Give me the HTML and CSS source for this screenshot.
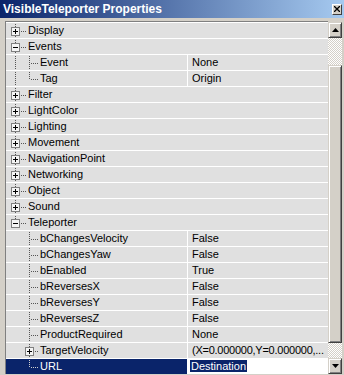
FILE: index.html
```html
<!DOCTYPE html>
<html lang="en">
<head>
  <meta charset="UTF-8">
  <title>VisibleTeleporter Properties</title>
  <link rel="stylesheet" href="styles.css">
</head>
<body>
  <div class="window">

    <!-- Caption -->
    <div class="titlebar">
      <div class="title">VisibleTeleporter Properties</div>
      <div class="close">
        <svg width="6" height="6" viewBox="0 0 6 6"><path d="M0 0L6 6M6 0L0 6" stroke="#000" stroke-width="1.3"/></svg>
      </div>
    </div>

    <div class="frame">
      <!-- Property list -->
      <div class="list">
        <div class="row cat">
          <div class="name"><span class="g g1 box plus"><i class="bx"></i></span><span class="label">Display</span></div>
        </div>
        <div class="row cat">
          <div class="name"><span class="g g1 box"><i class="bx"></i></span><span class="label">Events</span></div>
        </div>
        <div class="row prop">
          <div class="name"><span class="g g0 pipe"></span><span class="g g2 tee"></span><span class="label">Event</span></div>
          <div class="val">None</div>
        </div>
        <div class="row prop">
          <div class="name"><span class="g g0 pipe"></span><span class="g g2 end"></span><span class="label">Tag</span></div>
          <div class="val">Origin</div>
        </div>
        <div class="row cat">
          <div class="name"><span class="g g1 box plus"><i class="bx"></i></span><span class="label">Filter</span></div>
        </div>
        <div class="row cat">
          <div class="name"><span class="g g1 box plus"><i class="bx"></i></span><span class="label">LightColor</span></div>
        </div>
        <div class="row cat">
          <div class="name"><span class="g g1 box plus"><i class="bx"></i></span><span class="label">Lighting</span></div>
        </div>
        <div class="row cat">
          <div class="name"><span class="g g1 box plus"><i class="bx"></i></span><span class="label">Movement</span></div>
        </div>
        <div class="row cat">
          <div class="name"><span class="g g1 box plus"><i class="bx"></i></span><span class="label">NavigationPoint</span></div>
        </div>
        <div class="row cat">
          <div class="name"><span class="g g1 box plus"><i class="bx"></i></span><span class="label">Networking</span></div>
        </div>
        <div class="row cat">
          <div class="name"><span class="g g1 box plus"><i class="bx"></i></span><span class="label">Object</span></div>
        </div>
        <div class="row cat">
          <div class="name"><span class="g g1 box plus"><i class="bx"></i></span><span class="label">Sound</span></div>
        </div>
        <div class="row cat">
          <div class="name"><span class="g g1 box last"><i class="bx"></i></span><span class="label">Teleporter</span></div>
        </div>
        <div class="row prop">
          <div class="name"><span class="g g0"></span><span class="g g2 tee"></span><span class="label">bChangesVelocity</span></div>
          <div class="val">False</div>
        </div>
        <div class="row prop">
          <div class="name"><span class="g g0"></span><span class="g g2 tee"></span><span class="label">bChangesYaw</span></div>
          <div class="val">False</div>
        </div>
        <div class="row prop">
          <div class="name"><span class="g g0"></span><span class="g g2 tee"></span><span class="label">bEnabled</span></div>
          <div class="val">True</div>
        </div>
        <div class="row prop">
          <div class="name"><span class="g g0"></span><span class="g g2 tee"></span><span class="label">bReversesX</span></div>
          <div class="val">False</div>
        </div>
        <div class="row prop">
          <div class="name"><span class="g g0"></span><span class="g g2 tee"></span><span class="label">bReversesY</span></div>
          <div class="val">False</div>
        </div>
        <div class="row prop">
          <div class="name"><span class="g g0"></span><span class="g g2 tee"></span><span class="label">bReversesZ</span></div>
          <div class="val">False</div>
        </div>
        <div class="row prop">
          <div class="name"><span class="g g0"></span><span class="g g2 tee"></span><span class="label">ProductRequired</span></div>
          <div class="val">None</div>
        </div>
        <div class="row prop">
          <div class="name"><span class="g g0"></span><span class="g g2 box plus"><i class="bx"></i></span><span class="label">TargetVelocity</span></div>
          <div class="val long">(X=0.000000,Y=0.000000,...</div>
        </div>
        <div class="row prop selected">
          <div class="name"><span class="g g0"></span><span class="g g2 end"></span><span class="label">URL</span></div>
          <div class="val edit"><span class="sel">Destination</span></div>
        </div>
      </div>

      <!-- Scrollbar -->
      <div class="scrollbar">
        <div class="sbtn">
          <svg width="7" height="4" viewBox="0 0 7 4"><path d="M3.5 0L7 4H0Z" fill="#000"/></svg>
        </div>
        <div class="track top"></div>
        <div class="thumb"></div>
        <div class="track bottom"></div>
        <div class="sbtn">
          <svg width="7" height="4" viewBox="0 0 7 4"><path d="M0 0H7L3.5 4Z" fill="#000"/></svg>
        </div>
      </div>
    </div>
  </div>
</body>
</html>
```

FILE: styles.css
```css
body {
  margin: 0;
  font-family: "Liberation Sans", Arial, sans-serif;
  background: #d4d0c8;
}

.window {
  width: 344px;
  height: 375px;
  background: #d4d0c8;
  overflow: hidden;
}

/* Caption */
.titlebar {
  height: 18px;
  display: flex;
  justify-content: space-between;
  align-items: center;
  padding: 0 2px 0 3px;
  background: linear-gradient(to right, #0a246a, #a6caf0);
}

.title {
  color: #fff;
  font-weight: bold;
  font-size: 12px;
  line-height: 18px;
}

.close {
  width: 10px;
  height: 11px;
  box-sizing: border-box;
  display: flex;
  align-items: center;
  justify-content: center;
  background: #d4d0c8;
  border: 1px solid;
  border-color: #fff #404040 #404040 #fff;
}

/* Body */
.frame {
  display: flex;
  padding: 3px 2px 1px 5px;
}

.list {
  width: 323px;
  box-sizing: border-box;
  border-top: 1px solid #808080;
  border-left: 1px solid #808080;
  font-size: 11px;
  color: #000;
}

.row {
  height: 16px;
  box-sizing: border-box;
  border-top: 1px solid #fff;
  background: #e0e0e0;
  display: flex;
  --dot: #555;
}

.name {
  display: flex;
  align-items: flex-start;
  height: 15px;
  overflow: hidden;
}

.cat .name {
  flex: 1;
}

.prop .name {
  width: 181px;
  border-right: 1px solid #fff;
}

.label {
  line-height: 15px;
  white-space: nowrap;
  margin-left: 2px;
}

.val {
  flex: 1;
  line-height: 15px;
  padding-left: 4px;
  white-space: nowrap;
  overflow: hidden;
}

.val.long {
  letter-spacing: -0.25px;
}

.selected .name {
  background: #0a246a;
  color: #fff;
  --dot: #d0d0d0;
}

.val.edit {
  background: #fff;
  padding-left: 2px;
}

.val .sel {
  background: #0a246a;
  color: #fff;
  padding: 0 1px;
}

/* Tree guides */
.g {
  position: relative;
  flex: none;
  height: 15px;
}

.g0 { width: 18px; --x: 9px; }
.g1 { width: 20px; --x: 9px; }
.g2 { width: 14px; --x: 5px; }

.pipe::before,
.tee::before,
.end::before,
.box::before {
  content: "";
  position: absolute;
  left: var(--x);
  top: -1px;
  bottom: 0;
  width: 1px;
  background: repeating-linear-gradient(to bottom, var(--dot) 0 1px, transparent 1px 2px);
}

.end::before,
.box.last::before {
  bottom: auto;
  height: 10px;
}

.tee::after,
.end::after,
.box::after {
  content: "";
  position: absolute;
  left: calc(var(--x) + 2px);
  right: 0;
  top: 8px;
  height: 1px;
  background: repeating-linear-gradient(to right, var(--dot) 0 1px, transparent 1px 2px);
}

.box::after {
  left: calc(var(--x) + 6px);
}

.bx {
  position: absolute;
  z-index: 1;
  left: calc(var(--x) - 4px);
  top: 4px;
  width: 9px;
  height: 9px;
  box-sizing: border-box;
  border: 1px solid #808080;
  background: #f4f4f4;
}

.bx::before {
  content: "";
  position: absolute;
  left: 1px;
  top: 3px;
  width: 5px;
  height: 1px;
  background: #000;
}

.plus .bx::after {
  content: "";
  position: absolute;
  left: 3px;
  top: 1px;
  width: 1px;
  height: 5px;
  background: #000;
}

/* Scrollbar */
.scrollbar {
  width: 14px;
  margin-top: 1px;
  display: flex;
  flex-direction: column;
}

.sbtn,
.thumb {
  box-sizing: border-box;
  background: #d4d0c8;
  border: 1px solid;
  border-color: #d4d0c8 #404040 #404040 #d4d0c8;
  box-shadow: inset 1px 1px #fff, inset -1px -1px #808080;
}

.sbtn {
  height: 16px;
  display: flex;
  align-items: center;
  justify-content: center;
}

.track {
  background: repeating-conic-gradient(#fff 0 25%, #d4d0c8 0 50%) 0 0 / 2px 2px;
}

.track.top { height: 27px; }
.track.bottom { height: 15px; }

.thumb {
  height: 278px;
}
```
